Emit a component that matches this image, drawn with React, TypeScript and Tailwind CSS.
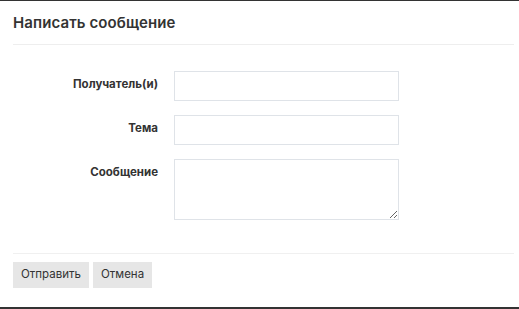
import React from "react";

const labelCls =
  "w-[161px] shrink-0 text-right text-[11.5px] font-bold text-[#333] pt-[5px] pr-4";
const inputCls =
  "block w-[225px] border border-[#dfe3e8] bg-white outline-none";

const App = () => {
  return (
    <div
      className="h-[309px] w-full bg-white border-t border-b-2 border-[#333] flex flex-col"
      style={{ fontFamily: "Inter, 'Open Sans', sans-serif" }}
    >
      <div className="mx-[13px] mr-[5px] h-[44px] pt-[2px] flex items-center border-b border-[#eeeeee]">
        <h1 className="text-[15px] font-semibold text-[#333] tracking-[0.1px]">
          Написать сообщение
        </h1>
      </div>

      <form className="flex flex-col gap-[14px] pt-[26px] pl-[13px]">
        <div className="flex items-start">
          <label className={labelCls}>Получатель(и)</label>
          <input className={`${inputCls} h-[30px]`} />
        </div>
        <div className="flex items-start">
          <label className={labelCls}>Тема</label>
          <input className={`${inputCls} h-[30px]`} />
        </div>
        <div className="flex items-start">
          <label className={labelCls}>Сообщение</label>
          <textarea className={`${inputCls} h-[61px]`} />
        </div>
      </form>

      <div className="mx-[13px] mr-[5px] mt-[33px] border-t border-[#f0f0f0] pt-[8px] flex gap-1">
        <button className="h-[26px] px-[8px] bg-[#e6e6e6] text-[11.5px] text-[#333]">
          Отправить
        </button>
        <button className="h-[26px] px-[8px] bg-[#e6e6e6] text-[11.5px] text-[#333]">
          Отмена
        </button>
      </div>
    </div>
  );
};

export default App;
